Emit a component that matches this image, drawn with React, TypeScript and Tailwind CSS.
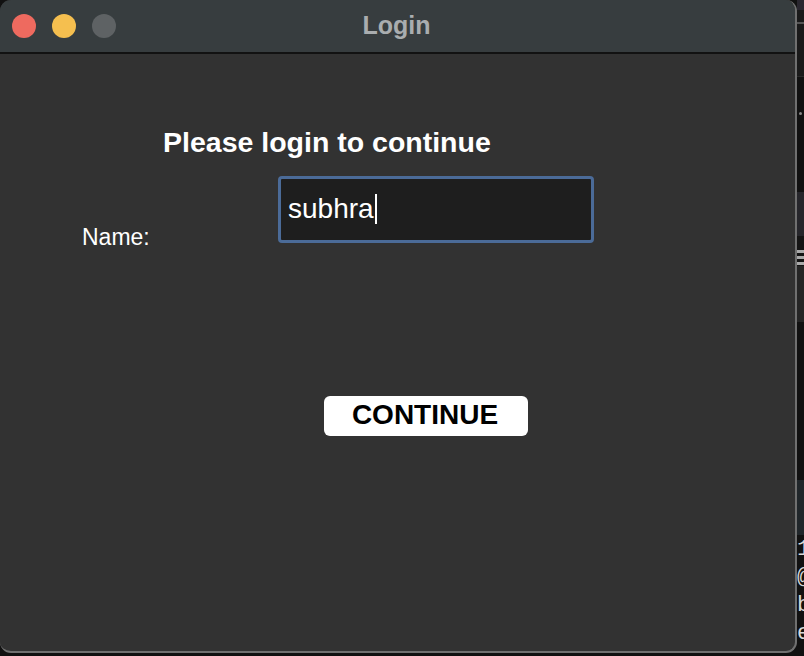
import React from 'react';

function TrafficLights() {
  return (
    <div className="flex items-center gap-[16px] pl-[12px]">
      <span className="block w-[24px] h-[24px] rounded-full bg-[#ee6a5f]" />
      <span className="block w-[24px] h-[24px] rounded-full bg-[#f5bf4f]" />
      <span className="block w-[24px] h-[24px] rounded-full bg-[#5e6264]" />
    </div>
  );
}

// sliver of the window behind, at the right edge
function BackWindowStrip() {
  return (
    <div className="flex flex-col w-[7px] h-full bg-[#121212] font-['Liberation_Mono',monospace] text-[#d8d8d8]">
      <div className="h-[10px] bg-[#2a2730]" />
      <div className="h-[12px] bg-[#1a1a1a]" />
      <div className="h-[2px] bg-[#555]" />
      <div className="h-[52px] bg-[#1a1a1a]" />
      <div className="h-[1px] bg-[#2a2a2a]" />
      <div className="h-[115px] bg-[#111] flex flex-col">
        <span className="block mt-[35px] ml-[2px] w-[3px] h-[3px] rounded-full bg-[#888]" />
      </div>
      <div className="h-[44px] bg-[#26262b]" />
      <div className="h-[14px] bg-[#141414]" />
      <div className="h-[16px] bg-[#141414] flex flex-col gap-[3px]">
        <span className="block h-[3px] bg-[#aaa]" />
        <span className="block h-[3px] bg-[#aaa]" />
        <span className="block h-[3px] bg-[#aaa]" />
      </div>
      <div className="h-[56px] bg-[#252525]" />
      <div className="h-[158px] bg-[#111]" />
      <div className="h-[55px] bg-[#20262a]" />
      <div className="flex-1 bg-[#111] overflow-hidden text-[22px] leading-[28px] pt-[1px]">
        <div>1</div>
        <div>@</div>
        <div>b</div>
        <div>e</div>
      </div>
    </div>
  );
}

export default function App() {
  return (
    <div className="w-[804px] h-[656px] flex bg-[#111] overflow-hidden font-['Liberation_Sans',Arial,sans-serif]">
      {/* Login window */}
      <div className="w-[797px] h-[653px] flex flex-col rounded-[11px] overflow-hidden border-r-2 border-b-2 border-[#707070] bg-[#323232]">
        {/* Title bar */}
        <div className="h-[54px] shrink-0 flex items-center bg-[#373d3f] border-b-2 border-[#121212] relative">
          <TrafficLights />
          <div className="absolute inset-0 flex items-center justify-center text-[25px] font-bold text-[#a9adaf] pr-[2px]">
            Login
          </div>
        </div>

        {/* Body */}
        <div className="flex-1 flex flex-col text-white">
          <div className="mt-[72px] pl-[163px] text-[28.5px] leading-[32px] font-bold">
            Please login to continue
          </div>

          <div className="mt-[18px] flex items-end">
            <div className="w-[278px] pl-[82px] text-[23px] leading-[26px] mb-[-7px]">Name:</div>
            <div className="w-[316px] h-[67px] rounded-[4px] border-[3px] border-[#4b6b98] bg-[#1e1e1e] flex items-center pl-[7px] pb-[2px]">
              <span className="text-[28px] leading-[30px]">subhra</span>
              <span className="block w-[2px] h-[30px] bg-white ml-[1px]" />
            </div>
          </div>

          <div className="mt-[153px] pl-[324px]">
            <button className="w-[204px] h-[40px] rounded-[6px] bg-white text-black text-[28px] leading-[30px] font-bold flex items-center justify-center pr-[2px] pb-[2px]">
              CONTINUE
            </button>
          </div>
        </div>
      </div>
      <BackWindowStrip />
    </div>
  );
}
